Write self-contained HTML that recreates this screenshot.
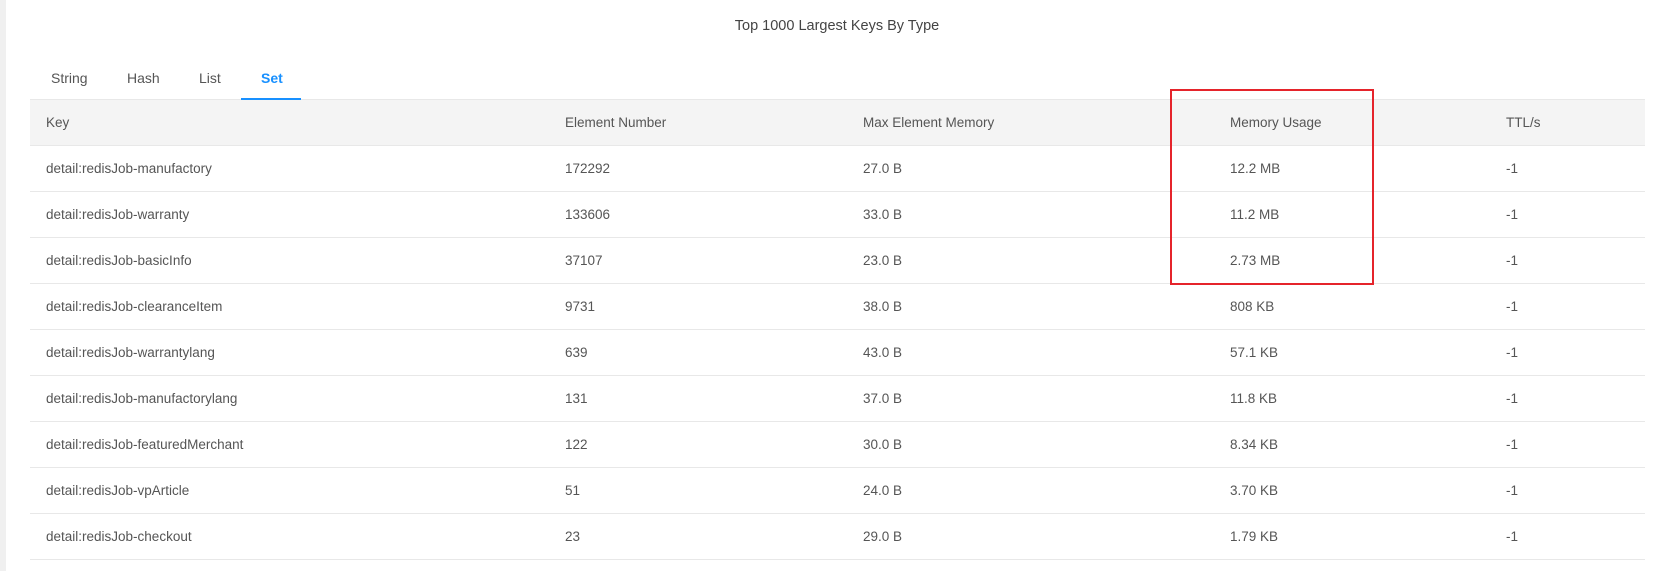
<!DOCTYPE html>
<html><head><style>
body{margin:0;width:1662px;height:571px;background:#fff;font-family:"Liberation Sans",sans-serif;font-size:13.5px;color:#555;position:relative;overflow:hidden}
.strip{position:absolute;left:0;top:0;width:6px;height:571px;background:#f0f0f0}
.title{position:absolute;top:18px;left:0;width:1674px;text-align:center;font-size:14.5px;color:#444}
.tab{position:absolute;top:70px;font-size:14px;color:#555}
.set{color:#1890ff;font-weight:bold}
.ul{position:absolute;left:241px;top:98px;width:60px;height:2px;background:#1890ff}
.row{position:absolute;left:30px;width:1615px;height:45px;border-bottom:1px solid #e8e8e8}
.row span{position:absolute;top:15px}
.hd{background:#f4f4f4;border-top:1px solid #e8e8e8;color:#555}
.box{position:absolute;left:1170px;top:89px;width:200px;height:192px;border:2px solid #e5242b}
</style></head><body>
<div class="strip"></div>
<div class="title">Top 1000 Largest Keys By Type</div>
<div class="tab" style="left:51px">String</div>
<div class="tab" style="left:127px">Hash</div>
<div class="tab" style="left:199px">List</div>
<div class="tab set" style="left:261px">Set</div>
<div class="row hd" style="top:99px"><span style="left:16px">Key</span><span style="left:535px">Element Number</span><span style="left:833px">Max Element Memory</span><span style="left:1200px">Memory Usage</span><span style="left:1476px">TTL/s</span></div>
<div class="ul"></div>
<div class="row" style="top:146px"><span style="left:16px">detail:redisJob-manufactory</span><span style="left:535px">172292</span><span style="left:833px">27.0 B</span><span style="left:1200px">12.2 MB</span><span style="left:1476px">-1</span></div>
<div class="row" style="top:192px"><span style="left:16px">detail:redisJob-warranty</span><span style="left:535px">133606</span><span style="left:833px">33.0 B</span><span style="left:1200px">11.2 MB</span><span style="left:1476px">-1</span></div>
<div class="row" style="top:238px"><span style="left:16px">detail:redisJob-basicInfo</span><span style="left:535px">37107</span><span style="left:833px">23.0 B</span><span style="left:1200px">2.73 MB</span><span style="left:1476px">-1</span></div>
<div class="row" style="top:284px"><span style="left:16px">detail:redisJob-clearanceItem</span><span style="left:535px">9731</span><span style="left:833px">38.0 B</span><span style="left:1200px">808 KB</span><span style="left:1476px">-1</span></div>
<div class="row" style="top:330px"><span style="left:16px">detail:redisJob-warrantylang</span><span style="left:535px">639</span><span style="left:833px">43.0 B</span><span style="left:1200px">57.1 KB</span><span style="left:1476px">-1</span></div>
<div class="row" style="top:376px"><span style="left:16px">detail:redisJob-manufactorylang</span><span style="left:535px">131</span><span style="left:833px">37.0 B</span><span style="left:1200px">11.8 KB</span><span style="left:1476px">-1</span></div>
<div class="row" style="top:422px"><span style="left:16px">detail:redisJob-featuredMerchant</span><span style="left:535px">122</span><span style="left:833px">30.0 B</span><span style="left:1200px">8.34 KB</span><span style="left:1476px">-1</span></div>
<div class="row" style="top:468px"><span style="left:16px">detail:redisJob-vpArticle</span><span style="left:535px">51</span><span style="left:833px">24.0 B</span><span style="left:1200px">3.70 KB</span><span style="left:1476px">-1</span></div>
<div class="row" style="top:514px"><span style="left:16px">detail:redisJob-checkout</span><span style="left:535px">23</span><span style="left:833px">29.0 B</span><span style="left:1200px">1.79 KB</span><span style="left:1476px">-1</span></div>
<div class="box"></div>
</body></html>
